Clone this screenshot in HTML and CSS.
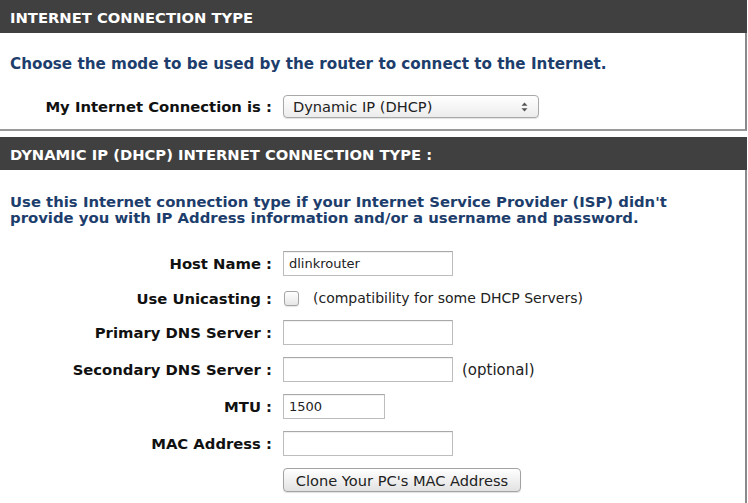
FILE: index.html
```html
<!DOCTYPE html>
<html>
<head>
<meta charset="utf-8">
<link rel="stylesheet" href="styles.css">
</head>
<body>
<section class="panel panel-first">
  <div class="panel-head">INTERNET CONNECTION TYPE</div>
  <div class="panel-body">
    <p class="intro">Choose the mode to be used by the router to connect to the Internet.</p>
    <div class="mode-row">
      <span class="label">My Internet Connection is :</span>
      <span class="select-wrap">
        <select class="select">
          <option>Dynamic IP (DHCP)</option>
        </select>
        <svg class="select-arrows" width="7" height="10" viewBox="0 0 7 10"><path d="M3.5 0.5 L6.5 3.8 H0.5 Z M3.5 9.5 L6.5 6.2 H0.5 Z" fill="#555"/></svg>
      </span>
    </div>
  </div>
</section>

<section class="panel panel-second">
  <div class="panel-head">DYNAMIC IP (DHCP) INTERNET CONNECTION TYPE :</div>
  <div class="panel-body">
    <p class="intro intro-narrow">Use this Internet connection type if your Internet Service Provider (ISP) didn't provide you with IP Address information and/or a username and password.</p>
    <div class="form">
      <div class="row">
        <span class="label">Host Name :</span>
        <span class="field"><input class="text" type="text" value="dlinkrouter"></span>
      </div>
      <div class="row row-short">
        <span class="label">Use Unicasting :</span>
        <span class="field"><input class="check" type="checkbox"><span class="note note-check">(compatibility for some DHCP Servers)</span></span>
      </div>
      <div class="row">
        <span class="label">Primary DNS Server :</span>
        <span class="field"><input class="text" type="text" value=""></span>
      </div>
      <div class="row">
        <span class="label">Secondary DNS Server :</span>
        <span class="field"><input class="text" type="text" value=""><span class="note note-opt">(optional)</span></span>
      </div>
      <div class="row">
        <span class="label">MTU :</span>
        <span class="field"><input class="text text-small" type="text" value="1500"></span>
      </div>
      <div class="row">
        <span class="label">MAC Address :</span>
        <span class="field"><input class="text" type="text" value=""></span>
      </div>
      <div class="row row-button">
        <span class="label"></span>
        <span class="field"><button class="btn" type="button">Clone Your PC's MAC Address</button></span>
      </div>
    </div>
  </div>
</section>
</body>
</html>
```
FILE: styles.css
```css
html, body {
  margin: 0;
  padding: 0;
  background: #fff;
}
body {
  width: 748px;
  font-family: "DejaVu Sans", Verdana, sans-serif;
  font-size: 13px;
  color: #000;
}
.panel {
  width: 747px;
}
.panel-second {
  margin-top: 6px;
}
.panel-head {
  height: 33px;
  line-height: 36px;
  background: #404040;
  color: #fff;
  font-weight: bold;
  font-size: 14.75px;
  padding-left: 10px;
  box-sizing: border-box;
  white-space: nowrap;
}
.panel-body {
  border-right: 2px solid #8a8a8a;
  border-bottom: 2px solid #9a9a9a;
  padding: 23px 0 0 10px;
}
.panel-first .panel-body {
  padding-bottom: 11px;
}
.panel-second .panel-body {
  padding-bottom: 9px;
}
.panel-second .intro {
  margin-top: 1px;
}
.intro {
  margin: 0;
  color: #1d3e6c;
  font-weight: bold;
  font-size: 15.2px;
  line-height: 16px;
  width: 690px;
  white-space: normal;
}
.intro-narrow {
  font-size: 14.85px;
}
.mode-row {
  display: flex;
  align-items: center;
  margin-top: 23px;
}
.label {
  width: 262px;
  flex: none;
  text-align: right;
  font-weight: bold;
  font-size: 14.8px;
  white-space: nowrap;
  margin-right: 11px;
  color: #111;
}
.select-wrap {
  position: relative;
  display: inline-block;
  height: 23px;
}
.select {
  -webkit-appearance: none;
  appearance: none;
  width: 256px;
  height: 23px;
  box-sizing: border-box;
  border: 1px solid #a9a9a9;
  border-radius: 4px;
  background: linear-gradient(#ffffff, #ececec);
  font-family: "DejaVu Sans", sans-serif;
  font-size: 14.6px;
  color: #222;
  padding: 0 0 0 9px;
  margin: 0;
  box-shadow: 0 1px 1px rgba(0,0,0,0.12);
}
.select-arrows {
  position: absolute;
  right: 11px;
  top: 7px;
}
.form {
  margin-top: 19px;
}
.row {
  display: flex;
  align-items: center;
  height: 37px;
}
.row-short {
  height: 32px;
}
.row-button {
  height: 36px;
  align-items: flex-start;
  padding-top: 6px;
  box-sizing: border-box;
}
.field {
  display: flex;
  align-items: center;
}
.text {
  width: 170px;
  height: 25px;
  box-sizing: border-box;
  border: 1px solid #bdbdbd;
  border-top-color: #a8a8a8;
  margin: 0;
  padding: 0 5px;
  font-family: "DejaVu Sans", sans-serif;
  font-size: 13px;
  color: #222;
  background: #fff;
  box-shadow: inset 0 1px 1px rgba(0,0,0,0.06);
}
.text-small {
  width: 102px;
}
.check {
  -webkit-appearance: none;
  appearance: none;
  width: 15px;
  height: 15px;
  margin: 0 0 0 1px;
  box-sizing: border-box;
  border: 1px solid #a5a5a5;
  border-radius: 3px;
  background: linear-gradient(#ffffff, #e6e6e6);
  box-shadow: 0 1px 1px rgba(0,0,0,0.1);
}
.note {
  font-family: "DejaVu Sans", sans-serif;
  font-size: 14px;
  color: #222;
}
.note-check {
  margin-left: 14px;
}
.note-opt {
  margin-left: 9px;
  font-size: 15px;
}
.btn {
  width: 238px;
  height: 24px;
  box-sizing: border-box;
  border: 1px solid #a3a3a3;
  border-radius: 4px;
  background: linear-gradient(#ffffff, #e2e2e2);
  font-family: "DejaVu Sans", sans-serif;
  font-size: 14.6px;
  color: #222;
  padding: 0;
  margin: 0;
  box-shadow: 0 1px 1px rgba(0,0,0,0.12);
}
```
